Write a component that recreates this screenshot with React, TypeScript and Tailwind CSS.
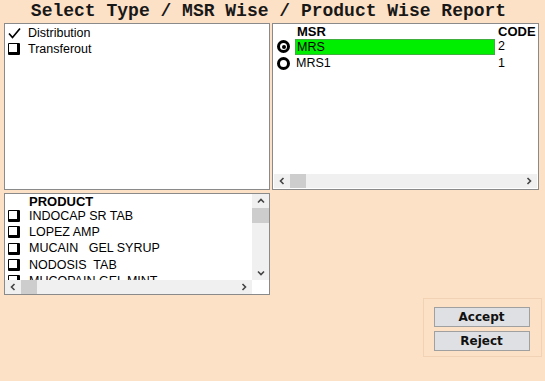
import React from 'react';

const products = ['INDOCAP SR TAB', 'LOPEZ AMP', 'MUCAIN   GEL SYRUP', 'NODOSIS  TAB', 'MUCOPAIN GEL MINT'];

function Box({ checked }: { checked?: boolean }) {
  if (checked) {
    return (
      <svg width="13" height="12" viewBox="0 0 13 12" className="shrink-0">
        <path d="M1 6.5 L4.5 10.5 L12 1.5" fill="none" stroke="#000" strokeWidth="1.7" />
      </svg>
    );
  }
  return (
    <span className="block w-[12px] h-[12px] shrink-0 bg-white border-t border-l border-t-black border-l-black border-r-[3px] border-b-[3px] border-r-black border-b-black rounded-[1px]" />
  );
}

function Radio({ on }: { on?: boolean }) {
  return (
    <span className="flex items-center justify-center w-[13px] h-[13px] shrink-0 rounded-full border-[3px] border-black bg-white">
      {on && <span className="block w-[4px] h-[4px] rounded-full bg-black" />}
    </span>
  );
}

function Chev({ d }: { d: string }) {
  return (
    <svg width="8" height="8" viewBox="0 0 8 8">
      <path d={d} fill="none" stroke="#444" strokeWidth="1.6" />
    </svg>
  );
}

function HScroll({ thumbLeft }: { thumbLeft: string }) {
  return (
    <div className="flex items-center h-[14px] bg-[#f0f0f0]">
      <span className="w-[16px] flex justify-center"><Chev d="M5.5 1 L2.5 4 L5.5 7" /></span>
      <span className={`h-full w-[16px] bg-[#cdcdcd] ${thumbLeft}`} />
      <span className="flex-1" />
      <span className="w-[16px] flex justify-center"><Chev d="M2.5 1 L5.5 4 L2.5 7" /></span>
    </div>
  );
}

export default function App() {
  return (
    <div className="w-[545px] h-[381px] bg-[#fde1c6] overflow-hidden font-['Liberation_Sans',Arial,sans-serif] text-[12.5px] text-black">
      <div className="h-[23px] pr-[8px] text-center font-['Liberation_Mono',monospace] font-bold text-[18px] leading-[23px] text-[#181818]">
        Select Type / MSR Wise / Product Wise Report
      </div>

      <div className="flex gap-[2px] pl-[4px]">
        {/* type list */}
        <div className="w-[266px] h-[167px] bg-white border border-[#8a8a8a] pt-[1px] pl-[3px]">
          <div className="flex items-center gap-[7px] h-[16px]">
            <Box checked />
            <span>Distribution</span>
          </div>
          <div className="flex items-center gap-[8px] h-[16px]">
            <Box />
            <span>Transferout</span>
          </div>
        </div>

        {/* MSR list */}
        <div className="w-[267px] h-[167px] bg-white border border-[#8a8a8a] flex flex-col">
          <div className="flex-1 pl-[4px]">
            <div className="flex h-[14px] items-end font-bold text-[13px] leading-none">
              <span className="ml-[20px] w-[201px]">MSR</span>
              <span>CODE</span>
            </div>
            <div className="flex items-center h-[17px]">
              <Radio on />
              <span className="ml-[5px] w-[200px] h-[16px] bg-[#00ee00] border border-[#3fae3f] leading-[14px] pl-[1px]">MRS</span>
              <span className="ml-[3px]">2</span>
            </div>
            <div className="flex items-center h-[16px]">
              <Radio />
              <span className="ml-[6px] w-[199px]">MRS1</span>
              <span className="ml-[3px]">1</span>
            </div>
          </div>
          <div className="px-[1px] pb-[1px]">
            <HScroll thumbLeft="ml-0" />
          </div>
        </div>
      </div>

      <div className="flex items-start pl-[4px] mt-[3px]">
        {/* product list */}
        <div className="w-[266px] h-[102px] bg-white border border-[#8a8a8a] flex flex-col">
          <div className="flex flex-1 min-h-0">
            <div className="flex-1 overflow-hidden pl-[3px]">
              <div className="h-[14px] pl-[21px] font-bold text-[13px] leading-[15px]">PRODUCT</div>
              {products.map((p) => (
                <div key={p} className="flex items-center h-[16.3px] gap-[9px] whitespace-pre">
                  <Box />
                  <span>{p}</span>
                </div>
              ))}
            </div>
            <div className="w-[17px] bg-[#f0f0f0] flex flex-col items-center">
              <span className="h-[14px] flex items-center"><Chev d="M1 5.5 L4 2.5 L7 5.5" /></span>
              <span className="w-full h-[15px] bg-[#cdcdcd]" />
              <span className="flex-1" />
              <span className="h-[14px] flex items-center"><Chev d="M1 2.5 L4 5.5 L7 2.5" /></span>
            </div>
          </div>
          <div className="pr-[17px]">
            <HScroll thumbLeft="ml-0" />
          </div>
        </div>

        {/* buttons */}
        <div className="ml-auto mr-[3px] mt-[105px] w-[119px] h-[59px] border border-[#f2d2b4] flex flex-col items-center gap-[4px] pt-[8px] pr-[2px]">
          <button className="w-[96px] h-[20px] bg-[#dfe0e3] border border-[#a0a0a0] font-['DejaVu_Sans',sans-serif] font-bold text-[12px] leading-none text-[#111]">
            Accept
          </button>
          <button className="w-[96px] h-[20px] bg-[#dfe0e3] border border-[#a0a0a0] font-['DejaVu_Sans',sans-serif] font-bold text-[12px] leading-none text-[#111]">
            Reject
          </button>
        </div>
      </div>
    </div>
  );
}
